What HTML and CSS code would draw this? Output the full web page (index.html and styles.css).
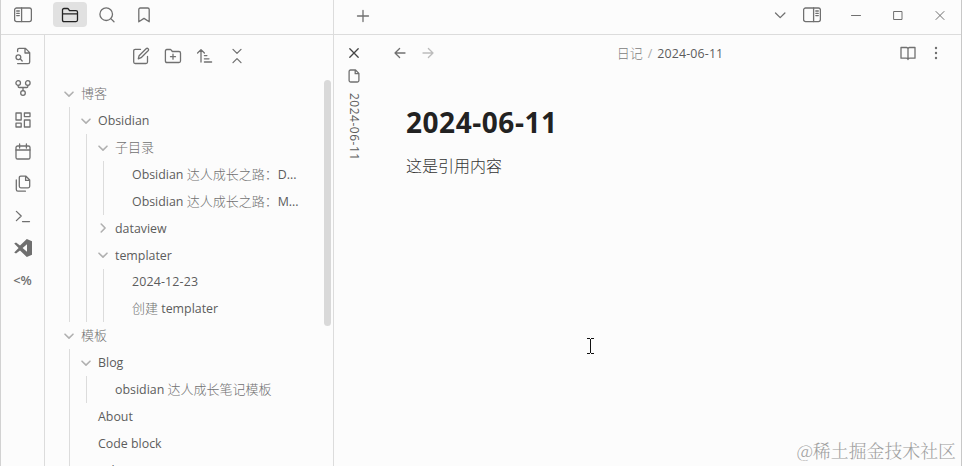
FILE: index.html
```html
<!DOCTYPE html>
<html lang="zh-CN">
<head>
<meta charset="utf-8">
<title>2024-06-11 - Obsidian</title>
<link rel="stylesheet" href="styles.css">
</head>
<body>
<svg width="0" height="0" class="defs">
  <symbol id="chev" viewBox="0 0 16 16"><path d="M4 6.2l4 3.9 4-3.9"/></symbol>
</svg>
<div class="window">
  <header class="titlebar">
    <div class="title-left">
      <span class="tool toggle"><svg class="ic" viewBox="0 0 18 16"><rect x=".6" y="1" width="16.8" height="13.6" rx="2"/><path d="M7.6 1v13.6M2.7 4h2.6M2.7 6.3h2.6M2.7 8.6h2.6"/></svg></span>
      <span class="tool active"><svg class="ic" viewBox="0 0 18 16"><path d="M1.5 6.8V3Q1.5 1.5 3 1.5h3.4q.7 0 1.1.6l1 1.5H15q1.5 0 1.5 1.5v8q0 1.5-1.5 1.5H3q-1.5 0-1.5-1.5zh15"/></svg></span>
      <span class="tool search"><svg class="ic" viewBox="0 0 18 16"><circle cx="8.2" cy="7.2" r="6.3"/><path d="M12.8 11.6l3.2 3.2"/></svg></span>
      <span class="tool mark"><svg class="ic" viewBox="0 0 18 16"><path d="M3.8 14.8V2.6q0-1.6 1.6-1.6h7.2q1.6 0 1.6 1.6v12.2L9 11.4z"/></svg></span>
    </div>
    <div class="title-right">
      <svg class="ic plus" viewBox="0 0 18 16"><path d="M9 2.5v11M3.5 8h11"/></svg>
      <div class="controls">
        <svg class="ic" viewBox="0 0 18 16"><path d="M4.5 6l4.7 4.6L13.9 6"/></svg>
        <svg class="ic panel" viewBox="0 0 18 16"><rect x=".6" y="1" width="16.8" height="13.6" rx="2"/><path d="M10.6 1v13.6M12.8 4h2.5M12.8 6.3h2.5M12.8 8.6h2.5"/></svg>
        <svg class="ic min" viewBox="0 0 18 16"><path d="M4.5 8.5h9"/></svg>
        <svg class="ic max" viewBox="0 0 18 16"><path d="M5 4.500h8V12.500H5z"/></svg>
        <svg class="ic close" viewBox="0 0 18 16"><path d="M5 4.500l8 8M13 4.500l-8 8"/></svg>
      </div>
    </div>
  </header>
  <div class="body">
    <nav class="ribbon">
      <svg class="ic" viewBox="0 0 18 18"><path d="M3.6 4.6V3q0-1.6 1.6-1.6h6.3l4.2 4.2V15q0 1.6-1.6 1.6H3.6M11 1.4V6h4.6M6.3 11.8L8.2 14"/><circle cx="4.4" cy="10.2" r="2.4"/></svg>
      <svg class="ic" viewBox="0 0 18 18"><circle cx="4.2" cy="4" r="2.3"/><circle cx="13.8" cy="4" r="2.3"/><circle cx="9" cy="14" r="2.3"/><path d="M4.2 6.3v1.2q0 1 1 1h7.6q1 0 1-1V6.3M9 8.5v3.2"/></svg>
      <svg class="ic" viewBox="0 0 18 18"><path d="M2 2h5.2v7H2zM10.4 2H16v3.6h-5.6zM10.4 9H16v7h-5.6zM2 12.2h5.2V16H2z"/></svg>
      <svg class="ic" viewBox="0 0 18 18"><rect x="2" y="3" width="14" height="13" rx="1.6"/><path d="M2 7h14M5.6 1v4M12.4 1v4"/></svg>
      <svg class="ic" viewBox="0 0 18 18"><path d="M12 1.2H6.8q-1.5 0-1.5 1.5v8.6q0 1.5 1.5 1.5h7.4q1.5 0 1.5-1.5V5zM11.6 1.2v4.2h4M2.3 5v9.6q0 1.6 1.6 1.6h7.5"/></svg>
      <svg class="ic" viewBox="0 0 18 18"><path d="M2.4 4.4L7.2 9l-4.8 4.6M8.5 14.6h7"/></svg>
      <svg class="solid" viewBox="0 0 18 18"><path fill-rule="evenodd" d="M12.8 0L18 2.3v13.4L12.8 18 6 11.5 2 14.6.2 13.4 4.6 9 .2 4.6 2 3.4l4 3.1zM13 5.2L8.6 9l4.4 3.8z"/></svg>
      <span class="templ">&lt;%</span>
    </nav>
    <aside class="files">
      <div class="actions">
        <svg class="ic" viewBox="0 0 18 18"><path d="M8.5 2.4H3.2q-1.5 0-1.5 1.5V15q0 1.5 1.5 1.5H14q1.5 0 1.5-1.5V9.5M6.3 11.8l.8-3.1 7-7q1-.9 2 0t0 2l-7 7z"/></svg>
        <svg class="ic" viewBox="0 0 18 18"><path d="M1.4 14.2V4q0-1.5 1.5-1.5h3.3q.7 0 1.1.6l1 1.4H15q1.5 0 1.5 1.5v8q0 1.5-1.5 1.5H2.9q-1.5 0-1.5-1.4zM9 7.2v5M6.5 9.7h5"/></svg>
        <svg class="ic" viewBox="0 0 18 18"><path d="M5 15V2.6M1.6 6L5 2.6 8.4 6M8.4 8.6h2.5M8.4 11.8H13M8.4 15h7.2"/></svg>
        <svg class="ic" viewBox="0 0 18 18"><path d="M5 2.4l4 4 4-4M5 15.6l4-4 4 4"/></svg>
      </div>
      <div class="tree">
        <div class="row"><svg class="fold"><use href="#chev"/></svg><i>博客</i></div>
        <div class="kids">
          <div class="row"><svg class="fold"><use href="#chev"/></svg>Obsidian</div>
          <div class="kids">
            <div class="row"><svg class="fold"><use href="#chev"/></svg><i>子目录</i></div>
            <div class="kids">
              <div class="row leaf">Obsidian <i>达人成长之路：</i>D...</div>
              <div class="row leaf">Obsidian <i>达人成长之路：</i>M...</div>
            </div>
            <div class="row"><svg class="fold closed"><use href="#chev"/></svg>dataview</div>
            <div class="row"><svg class="fold"><use href="#chev"/></svg>templater</div>
            <div class="kids">
              <div class="row leaf digits">2024-12-23</div>
              <div class="row leaf"><i>创建</i> templater</div>
            </div>
          </div>
        </div>
        <div class="row"><svg class="fold"><use href="#chev"/></svg><i>模板</i></div>
        <div class="kids">
          <div class="row"><svg class="fold"><use href="#chev"/></svg>Blog</div>
          <div class="kids">
            <div class="row leaf">obsidian <i>达人成长笔记模板</i></div>
          </div>
          <div class="row leaf">About</div>
          <div class="row leaf">Code block</div>
          <div class="row leaf">cube</div>
        </div>
      </div>
      <div class="scroll"></div>
    </aside>
    <main class="workspace">
      <div class="stack-tab">
        <svg class="ic dark" viewBox="0 0 16 16"><path d="M3.8 3.8l8.4 8.4M12.2 3.8l-8.4 8.4"/></svg>
        <svg class="ic" viewBox="0 0 16 16"><path d="M9.5 2H4.6q-1.5 0-1.5 1.5v9q0 1.5 1.5 1.5h6.8q1.5 0 1.5-1.5V5.4zM9.2 2v3.7h3.7"/></svg>
        <span class="vert">2024-06-11</span>
      </div>
      <article class="pane">
        <div class="pane-head">
          <svg class="ic" viewBox="0 0 16 16"><path d="M13 8H3M7.6 3.5L3 8l4.6 4.5"/></svg>
          <svg class="ic faint" viewBox="0 0 16 16"><path d="M3 8h10M8.4 3.5L13 8l-4.6 4.5"/></svg>
          <div class="crumb"><i>日记</i><span class="sep">/</span><span class="digits">2024-06-11</span></div>
          <svg class="ic" viewBox="0 0 16 16"><path d="M8 4q0-1.500-1.500-1.500H1v10.700h5.200q1.800 0 1.800 1.300 0-1.300 1.800-1.300H15V2.500H9.500Q8 2.500 8 4zv10"/></svg>
          <svg class="solid dots" viewBox="0 0 16 16"><circle cx="8" cy="3" r="1.2"/><circle cx="8" cy="8" r="1.2"/><circle cx="8" cy="13" r="1.2"/></svg>
        </div>
        <h1>2024-06-11</h1>
        <p>这是引用内容</p>
      </article>
    </main>
  </div>
  <svg class="cursor" viewBox="0 0 7 16"><path d="M0 .5h3M4 .5h3M3.500 1v14M0 15.500h3M4 15.500h3"/></svg>
  <div class="watermark">@稀土掘金技术社区</div>
</div>
</body>
</html>
```
FILE: styles.css
```css
* { box-sizing: border-box; }
body { margin: 0; overflow: hidden; background: #fcfcfc; }
.defs { position: absolute; }
.window {
  position: relative;
  width: 962px;
  height: 466px;
  overflow: hidden;
  display: flex;
  flex-direction: column;
  border-left: 1px solid #d2d2d2;
  border-right: 1px solid #c8c8c8;
  font-family: "Open Sans", "Noto Sans CJK SC", sans-serif;
  font-size: 12.4px;
  color: #5c5c5c;
}
i { font-style: normal; font-size: 13px; font-weight: 300; font-family: "Noto Sans CJK SC", sans-serif; color: #707070; padding-bottom: 2px; }
.ic { width: 18px; height: 16px; fill: none; stroke: #707070; stroke-width: 1.3; stroke-linecap: round; stroke-linejoin: round; flex: none; }
.solid { fill: #6f6f6f; flex: none; }

.titlebar { height: 35px; flex: none; display: flex; border-bottom: 1px solid #dcdcdc; }
.title-left { width: 333px; display: flex; align-items: center; padding: 0 0 5px 5px; border-right: 1px solid #dcdcdc; }
.tool { width: 34px; height: 25px; display: flex; align-items: center; justify-content: center; border-radius: 4px; }
.active { margin: 0 3px 0 13px; background: #e1e1e1; }
.active .ic { stroke: #222; }
.mark { margin-left: 3px; }
.title-right { flex: 1; display: flex; align-items: center; padding: 0 12px 4px 20px; }
.plus { margin-top: 2px; }
.controls { margin-left: auto; display: flex; align-items: center; }
.panel { margin-left: 14px; }
.min { margin-left: 26px; stroke-width: 1; }
.max { margin-left: 24px; stroke-width: 1; }
.close { margin-left: 24px; stroke-width: 1; }

.body { flex: 1; display: flex; min-height: 0; }
.ribbon { width: 44px; flex: none; border-right: 1px solid #dcdcdc; display: flex; flex-direction: column; align-items: center; gap: 14px; padding-top: 12px; }
.ribbon svg { width: 18px; height: 18px; }
.templ { font-size: 13px; line-height: 18px; font-weight: 600; color: #6f6f6f; }

.files { position: relative; width: 289px; flex: none; border-right: 1px solid #dcdcdc; overflow: hidden; }
.actions { display: flex; gap: 14px; padding: 12px 0 0 87px; }
.actions .ic { width: 18px; height: 18px; }
.tree { padding: 15.3px 20px 0 16px; }
.row { height: 26.9px; display: flex; align-items: center; white-space: pre; }
.leaf { padding-left: 20px; }
.digits { letter-spacing: .15px; }
.kids { margin-left: 8px; padding-left: 8px; border-left: 1px solid #dcdcdc; }
.fold { width: 16px; height: 16px; margin-right: 4px; fill: none; stroke: #b0b0b0; stroke-width: 1.6; stroke-linecap: round; stroke-linejoin: round; }
.closed { transform: rotate(-90deg); }
.scroll { position: absolute; right: 2px; top: 45px; width: 7px; height: 246px; border-radius: 4px; background: #d9d9d9; }

.workspace { flex: 1; display: flex; min-width: 0; }
.stack-tab { width: 40px; display: flex; flex-direction: column; align-items: center; padding-top: 10px; }
.stack-tab .ic { width: 16px; height: 16px; margin-bottom: 7px; }
.stack-tab .dark { stroke: #444; }
.vert { writing-mode: vertical-rl; font-size: 12px; line-height: 16px; margin-top: 2px; letter-spacing: .5px; }
.pane { flex: 1; min-width: 0; padding: 0 17px 0 18px; }
.pane-head { display: flex; align-items: center; height: 36px; gap: 12px; }
.pane-head svg { width: 16px; height: 16px; }
.pane-head .faint { stroke: #bcbcbc; }
.crumb { flex: 1; display: flex; align-items: center; justify-content: center; font-size: 12.4px; padding-left: 4px; }
.crumb i { color: #808080; }
.sep { color: #aaa; margin: 0 5px; }
h1 { margin: 29px 0 0 14px; font-size: 28px; line-height: 44px; font-weight: 700; color: #222; letter-spacing: .55px; }
p { margin: 8px 0 0 14px; font: 300 16px/26px "Noto Sans CJK SC", sans-serif; color: #333; }

.cursor { position: absolute; left: 586px; top: 338px; width: 7px; height: 16px; stroke: #111; fill: none; }
.watermark { position: absolute; right: 5px; bottom: 3px; font: 300 17.9px/26px "Noto Serif CJK SC", "Noto Sans CJK SC", serif; color: #a0a0a0; white-space: nowrap; }
```
